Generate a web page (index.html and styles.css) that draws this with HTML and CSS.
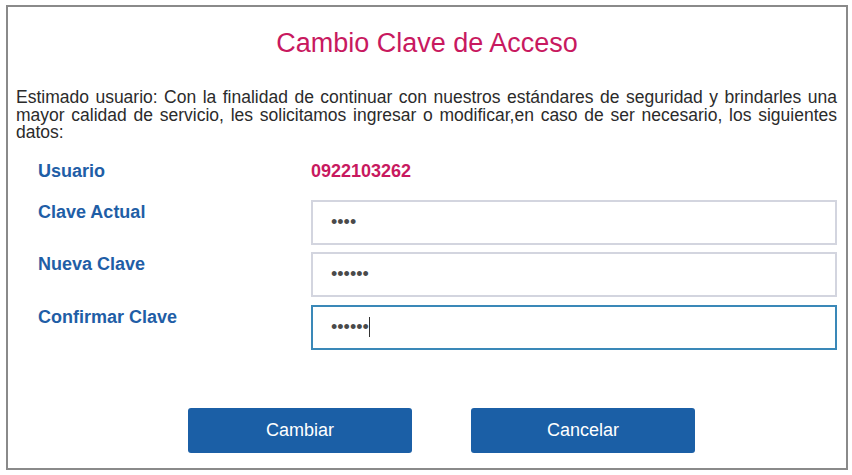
FILE: index.html
```html
<!DOCTYPE html>
<html lang="es">
<head>
<meta charset="utf-8">
<title>Cambio Clave de Acceso</title>
<link rel="stylesheet" href="styles.css">
</head>
<body>
<div class="box">
  <h1 class="title">Cambio Clave de Acceso</h1>
  <p class="intro">Estimado usuario: Con la finalidad de continuar con nuestros estándares de seguridad y brindarles una mayor calidad de servicio, les solicitamos ingresar o modificar,en caso de ser necesario, los siguientes datos:</p>
  <form class="form">
    <div class="user-row">
      <span class="label">Usuario</span>
      <span class="value">0922103262</span>
    </div>
    <div class="fields">
      <label class="label" for="actual">Clave Actual</label>
      <div class="field"><input id="actual" class="input" type="password" value="abcd"></div>
      <label class="label" for="nueva">Nueva Clave</label>
      <div class="field"><input id="nueva" class="input" type="password" value="abcdef"></div>
      <label class="label" for="confirmar">Confirmar Clave</label>
      <div class="field"><input id="confirmar" class="input input-focus" type="password" value="abcdef"><span class="caret"></span></div>
    </div>
    <div class="actions">
      <button type="button" class="btn">Cambiar</button>
      <button type="button" class="btn">Cancelar</button>
    </div>
  </form>
</div>
</body>
</html>
```
FILE: styles.css
```css
html, body {
  margin: 0;
  padding: 0;
  background: #fff;
}
body {
  font-family: "Liberation Sans", Arial, sans-serif;
  color: #333;
}
.box {
  margin: 5px 4px 5px 6px;
  height: 465px;
  box-sizing: border-box;
  border: 2px solid #8a8a8a;
  padding: 0 8px;
}
.title {
  margin: 21px 0 0;
  font-size: 27px;
  font-weight: normal;
  line-height: 31px;
  text-align: center;
  color: #c8195f;
}
.intro {
  margin: 30px 1px 0 0;
  font-size: 17.5px;
  line-height: 17.7px;
  text-align: justify;
  color: #2b2b2b;
}
.form {
  margin: 19px 1px 0 22px;
}
.user-row {
  display: grid;
  grid-template-columns: 273px 1fr;
  font-size: 18px;
  font-weight: bold;
  line-height: 20.7px;
  margin-bottom: 17.7px;
}
.label {
  font-size: 18px;
  font-weight: bold;
  color: #1f5ea6;
  line-height: 20.7px;
  padding-top: 2px;
}
.user-row .label {
  padding-top: 0;
}
.value {
  color: #c8195f;
}
.fields {
  display: grid;
  grid-template-columns: 273px 1fr;
  row-gap: 7.5px;
}
.field {
  position: relative;
}
.input {
  display: block;
  width: 100%;
  height: 45px;
  box-sizing: border-box;
  border: 2px solid #d3d5df;
  padding: 0 18px;
  font-family: "Liberation Sans", Arial, sans-serif;
  font-size: 18px;
  color: #4a4a4a;
  background: #fff;
  outline: none;
  margin: 0;
}
.input-focus {
  border-color: #3a88b8;
}
.caret {
  position: absolute;
  left: 58px;
  top: 12px;
  width: 1px;
  height: 20px;
  background: #333;
}
.actions {
  display: flex;
  gap: 59px;
  margin-top: 58px;
  padding-left: 150px;
}
.btn {
  width: 224px;
  height: 45px;
  border: none;
  border-radius: 3px;
  background: #1b5fa6;
  color: #fff;
  font-family: "Liberation Sans", Arial, sans-serif;
  font-size: 18px;
  padding: 0;
  cursor: pointer;
}
```
